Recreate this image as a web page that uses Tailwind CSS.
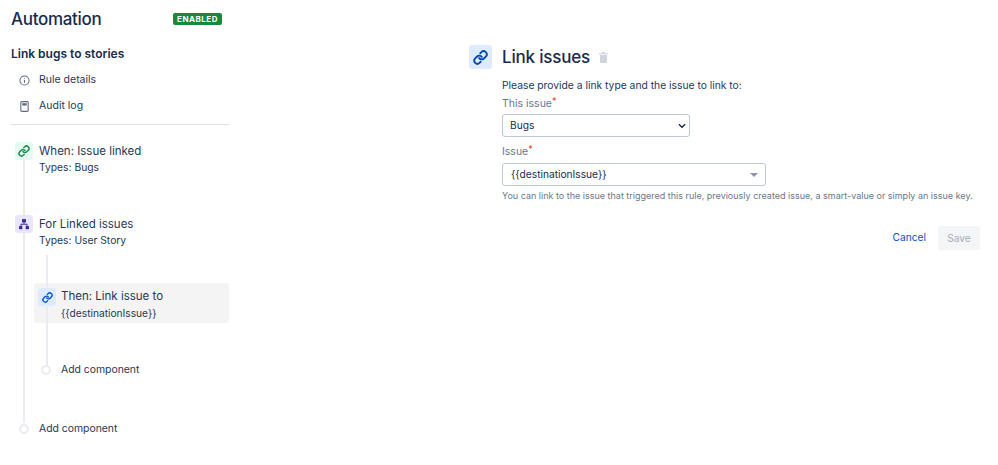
<!DOCTYPE html>
<html>
<head>
<meta charset="utf-8">
<script src="https://cdn.jsdelivr.net/npm/@tailwindcss/browser@4"></script>
</head>
<body class="bg-white font-['Inter',sans-serif] text-[#172b4d] antialiased">
<div class="flex w-[998px] h-[465px] overflow-hidden">
  <aside class="w-[218px] ml-[11px] shrink-0 relative">
    <div class="flex items-center justify-between h-[24px] mt-[7px]">
      <h1 class="text-[17px] leading-[24px] font-medium tracking-[-0.3px]">Automation</h1>
      <span class="mr-[7px] h-[12px] w-[49px] rounded-[2px] bg-[#16893a] text-white text-[8px] leading-[12px] font-bold tracking-[0.5px] text-center">ENABLED</span>
    </div>
    <h2 class="mt-[15px] text-[12px] leading-[16px] font-semibold">Link bugs to stories</h2>
    <nav class="mt-[5px] text-[10.5px] text-[#253858]">
      <div class="flex items-center h-[26px] pl-[8px] gap-[9px]">
        <svg class="w-[11px] h-[11px] shrink-0" viewBox="0 0 12 12" fill="none" stroke="#5e6c84"><circle cx="6" cy="6" r="5" stroke-width="1.1"/><path d="M6 5.4v3M6 3.2v1" stroke-width="1.2"/></svg>
        <span>Rule details</span>
      </div>
      <div class="flex items-center h-[26px] pl-[8px] gap-[9px]">
        <svg class="w-[11px] h-[11px] shrink-0" viewBox="0 0 12 12" fill="none" stroke="#5e6c84"><rect x="2" y="0.7" width="8" height="10.6" rx="1" stroke-width="1.2"/><rect x="3.6" y="2.4" width="4.8" height="2.6" fill="#5e6c84" stroke="none"/></svg>
        <span>Audit log</span>
      </div>
    </nav>
    <div class="mt-[5px] h-[1px] bg-[#dfe1e6]"></div>

    <div class="absolute left-[12px] top-[159px] w-[2px] h-[264px] bg-[#ebecf0]"></div>
    <div class="absolute left-[35px] top-[255px] w-[2px] h-[110px] bg-[#ebecf0] z-10"></div>

    <div class="mt-[17px] flex gap-[6px] pl-[4px] h-[73px] relative">
      <span class="w-[18px] h-[18px] rounded-[3px] bg-[#e3fcef] flex items-center justify-center shrink-0">
        <svg class="w-[12px] h-[12px]" viewBox="0 0 24 24" fill="none" stroke="#1f8a55" stroke-width="3" stroke-linecap="round" stroke-linejoin="round"><path d="M10 13a5 5 0 0 0 7.54.54l3-3a5 5 0 0 0-7.07-7.07l-1.72 1.71"/><path d="M14 11a5 5 0 0 0-7.54-.54l-3 3a5 5 0 0 0 7.07 7.07l1.71-1.71"/></svg>
      </span>
      <div>
        <div class="text-[11.5px] leading-[18px] text-[#253858]">When: Issue linked</div>
        <div class="text-[10.3px] leading-[15px] text-[#253858]">Types: Bugs</div>
      </div>
    </div>

    <div class="flex gap-[6px] pl-[4px] h-[68px] relative">
      <span class="w-[18px] h-[18px] rounded-[3px] bg-[#eae6ff] flex items-center justify-center shrink-0">
        <svg class="w-[12px] h-[12px]" viewBox="0 0 12 12" fill="#403294"><rect x="4" y="1" width="4" height="3.4" rx="0.7"/><rect x="1" y="8" width="3.4" height="3.2" rx="0.7"/><rect x="7.6" y="8" width="3.4" height="3.2" rx="0.7"/><path d="M5.5 4h1v1.7h3v2.5h-1V6.7h-5v1.5h-1V5.7h3z"/></svg>
      </span>
      <div>
        <div class="text-[11.5px] leading-[18px] text-[#253858]">For Linked issues</div>
        <div class="text-[10.3px] leading-[15px] text-[#253858]">Types: User Story</div>
      </div>
    </div>

    <div class="ml-[23px] h-[40px] rounded-[3px] bg-[#f4f4f5] flex gap-[5px] pl-[4px] pt-[5px] relative z-20">
      <div class="absolute left-[12px] top-0 w-[2px] h-full bg-[#ebecf0]"></div>
      <span class="w-[18px] h-[18px] rounded-[3px] bg-[#deebff] flex items-center justify-center shrink-0 relative">
        <svg class="w-[11px] h-[11px]" viewBox="0 0 24 24" fill="none" stroke="#0052cc" stroke-width="3" stroke-linecap="round" stroke-linejoin="round"><path d="M10 13a5 5 0 0 0 7.54.54l3-3a5 5 0 0 0-7.07-7.07l-1.72 1.71"/><path d="M14 11a5 5 0 0 0-7.54-.54l-3 3a5 5 0 0 0 7.07 7.07l1.71-1.71"/></svg>
      </span>
      <div class="-mt-[1px] relative">
        <div class="text-[11.5px] leading-[18px] text-[#253858]">Then: Link issue to</div>
        <div class="text-[10.2px] leading-[16px] text-[#253858]">{{destinationIssue}}</div>
      </div>
    </div>

    <div class="mt-[41px] h-[12px] flex items-center ml-[30px] gap-[10px] relative z-40">
      <span class="w-[10px] h-[10px] rounded-full border-2 border-[#ebecf0] bg-white shrink-0"></span>
      <span class="text-[10.4px] text-[#253858]">Add component</span>
    </div>

    <div class="mt-[47px] h-[12px] flex items-center ml-[8px] gap-[10px] relative z-40">
      <span class="w-[10px] h-[10px] rounded-full border-2 border-[#ebecf0] bg-white shrink-0"></span>
      <span class="text-[10.4px] text-[#253858]">Add component</span>
    </div>
  </aside>

  <main class="ml-[240px] pt-[45px] flex gap-[10px] w-[511px] shrink-0">
    <span class="w-[23px] h-[24px] rounded-[3px] bg-[#deebff] flex items-center justify-center shrink-0">
      <svg class="w-[15px] h-[15px]" viewBox="0 0 24 24" fill="none" stroke="#0747a6" stroke-width="3" stroke-linecap="round" stroke-linejoin="round"><path d="M10 13a5 5 0 0 0 7.54.54l3-3a5 5 0 0 0-7.07-7.07l-1.72 1.71"/><path d="M14 11a5 5 0 0 0-7.54-.54l-3 3a5 5 0 0 0 7.07 7.07l1.71-1.71"/></svg>
    </span>
    <div class="flex-1">
      <div class="flex items-center gap-[9px] h-[24px]">
        <h2 class="text-[17px] leading-[24px] font-medium tracking-[-0.2px]">Link issues</h2>
        <svg class="w-[9px] h-[11px] mt-[1px]" viewBox="0 0 9 11" fill="#d0d4db"><rect x="0" y="1.2" width="9" height="1.2"/><rect x="3" y="0" width="3" height="1.2"/><path d="M1 3h7v7a1 1 0 0 1-1 1H2a1 1 0 0 1-1-1z"/></svg>
      </div>
      <p class="mt-[8px] text-[10.3px] leading-[16px] text-[#253858]">Please provide a link type and the issue to link to:</p>
      <label class="block mt-[3px] text-[10.5px] leading-[16px] text-[#6b778c]">This issue<span class="text-[#de350b] text-[9px] align-top leading-[10px]">*</span></label>
      <div class="mt-[2px] w-[188px] h-[23px] rounded-[3px] border border-[#c1c7d0] bg-white flex items-center justify-between pl-[7px] pr-[3px] text-[10.2px] text-[#172b4d]">
        <span>Bugs</span>
        <svg class="w-[8px] h-[6px]" viewBox="0 0 9 6" fill="none" stroke="#172b4d" stroke-width="1.6"><path d="M1 1l3.5 3.5L8 1"/></svg>
      </div>
      <label class="block mt-[7px] text-[10.5px] leading-[16px] text-[#6b778c]">Issue<span class="text-[#de350b] text-[9px] align-top leading-[10px]">*</span></label>
      <div class="mt-[3px] w-[264px] h-[23px] rounded-[3px] border border-[#c1c7d0] bg-white flex items-center justify-between pl-[8px] pr-[7px] text-[10.2px] text-[#172b4d]">
        <span>{{destinationIssue}}</span>
        <span class="w-0 h-0 border-l-[4px] border-r-[4px] border-t-[4px] border-l-transparent border-r-transparent border-t-[#8993a4]"></span>
      </div>
      <p class="mt-[2px] text-[9px] leading-[16px] whitespace-nowrap text-[#6b778c]">You can link to the issue that triggered this rule, previously created issue, a smart-value or simply an issue key.</p>
      <div class="mt-[22px] w-[478px] flex items-center justify-end gap-[12px]">
        <span class="text-[10.2px] text-[#0052cc]">Cancel</span>
        <span class="w-[42px] h-[24px] rounded-[3px] bg-[#f4f5f7] text-[#a5adba] text-[10.2px] leading-[24px] text-center">Save</span>
      </div>
    </div>
  </main>
</div>
</body>
</html>
